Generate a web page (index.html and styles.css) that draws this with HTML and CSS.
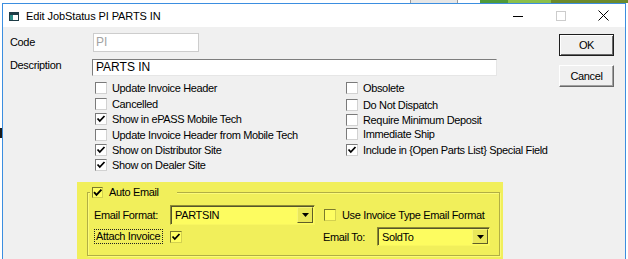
FILE: index.html
```html
<!DOCTYPE html>
<html lang="en">
<head>
    <meta charset="UTF-8">
    <title>Edit JobStatus PI PARTS IN</title>
    <link rel="stylesheet" href="styles.css">
</head>
<body>
    <div class="desk">
        <div class="top-strip">
            <span class="strip-white"></span>
            <span class="strip-box"></span>
            <span class="strip-gap"></span>
            <span class="strip-green"></span>
            <span class="strip-lime"></span>
            <span class="strip-olive"></span>
        </div>
        <div class="desk-row">
            <div class="left-strip"><span class="left-mark"></span></div>
            <div class="window">
                <div class="titlebar">
                    <svg class="app-icon" width="10" height="9" viewBox="0 0 10 9">
                        <rect x="0.5" y="0.5" width="9" height="8" fill="#fff" stroke="#1e3c46"/>
                        <rect x="1" y="1" width="8" height="2" fill="#1e3c46"/>
                        <rect x="1" y="3" width="3" height="5" fill="#2f8f8a"/>
                    </svg>
                    <span class="title">Edit JobStatus PI PARTS IN</span>
                    <div class="controls">
                        <span class="ctl">
                            <svg width="10" height="10" viewBox="0 0 10 10"><line x1="0" y1="5.5" x2="10" y2="5.5" stroke="#000"/></svg>
                        </span>
                        <span class="ctl">
                            <svg width="10" height="10" viewBox="0 0 10 10"><rect x="0.5" y="0.5" width="9" height="9" fill="none" stroke="#cccccc"/></svg>
                        </span>
                        <span class="ctl">
                            <svg width="11" height="11" viewBox="0 0 11 11"><path d="M0.5 0.5 L10.5 10.5 M10.5 0.5 L0.5 10.5" stroke="#000" stroke-width="1"/></svg>
                        </span>
                    </div>
                </div>

                <div class="client">
                    <div class="form">
                        <div class="row row-code">
                            <span class="lbl lbl-code">Code</span>
                            <div class="edit edit-code">PI</div>
                        </div>
                        <div class="row row-desc">
                            <span class="lbl lbl-desc">Description</span>
                            <div class="edit edit-desc">PARTS IN</div>
                        </div>

                        <div class="checks">
                            <div class="check-col left-col">
                                <div class="check h16"><span class="box"></span>Update Invoice Header</div>
                                <div class="check h15"><span class="box"></span>Cancelled</div>
                                <div class="check h16"><span class="box checked"></span>Show in ePASS Mobile Tech</div>
                                <div class="check h15"><span class="box"></span>Update Invoice Header from Mobile Tech</div>
                                <div class="check h15"><span class="box checked"></span>Show on Distributor Site</div>
                                <div class="check h15"><span class="box checked"></span>Show on Dealer Site</div>
                            </div>
                            <div class="check-col right-col">
                                <div class="check h16"><span class="box"></span>Obsolete</div>
                                <div class="check h17"><span class="box"></span>Do Not Dispatch</div>
                                <div class="check h13"><span class="box"></span>Require Minimum Deposit</div>
                                <div class="check h15"><span class="box"></span>Immediate Ship</div>
                                <div class="check h17"><span class="box checked"></span>Include in {Open Parts List} Special Field</div>
                            </div>
                        </div>

                        <div class="highlight">
                            <div class="group">
                                <div class="legend"><span class="box hl checked"></span>Auto Email</div>
                                <div class="grow grow-1">
                                    <span class="lbl-format">Email Format:</span>
                                    <div class="combo combo-format">
                                        <span class="combo-text">PARTSIN</span>
                                        <span class="drop"></span>
                                    </div>
                                    <span class="box hl use-box"></span>
                                    <span>Use Invoice Type Email Format</span>
                                </div>
                                <div class="grow grow-2">
                                    <span class="focus-lbl">Attach Invoice</span>
                                    <span class="box hl checked attach-box"></span>
                                    <span class="lbl-to">Email To:</span>
                                    <div class="combo combo-to">
                                        <span class="combo-text">SoldTo</span>
                                        <span class="drop"></span>
                                    </div>
                                </div>
                            </div>
                        </div>
                    </div>

                    <div class="buttons">
                        <button class="btn btn-default">OK</button>
                        <button class="btn">Cancel</button>
                    </div>
                </div>
            </div>
        </div>
    </div>
</body>
</html>
```

FILE: styles.css
```css
* {
    box-sizing: border-box;
}

body {
    margin: 0;
    width: 628px;
    height: 259px;
    overflow: hidden;
    background-color: #ffffff;
    font-family: 'Liberation Sans', Arial, sans-serif;
    font-size: 11px;
    letter-spacing: -0.35px;
    color: #000000;
}

.desk {
    display: flex;
    flex-direction: column;
    height: 259px;
}

/* bits of the windows behind the dialog */
.top-strip {
    height: 3px;
    display: flex;
}

.strip-white { width: 410px; }
.strip-box { width: 48px; border-left: 1px solid #9a9a9a; border-right: 1px solid #9a9a9a; background-color: #e6e6e6; }
.strip-gap { width: 22px; }
.strip-green { width: 28px; background-color: #4f9a3a; }
.strip-lime { width: 43px; background-color: #8cc04a; }
.strip-olive { width: 77px; background-color: #6c8a2c; }

.desk-row {
    flex: 1;
    display: flex;
}

.left-strip {
    width: 2px;
    padding-top: 125px;
}

.left-mark {
    display: block;
    width: 2px;
    height: 10px;
    background-color: #1a1a1a;
}

.window {
    width: 624px;
    border: 1px solid #3b8ee0;
    border-bottom: none;
    display: flex;
    flex-direction: column;
}

.titlebar {
    height: 23px;
    background-color: #ffffff;
    display: flex;
    align-items: center;
}

.app-icon {
    margin-left: 6px;
    margin-top: 1px;
}

.title {
    margin-left: 7px;
    font-size: 11px;
    letter-spacing: -0.1px;
    color: #000000;
}

.controls {
    margin-left: auto;
    display: flex;
    height: 23px;
}

.ctl {
    width: 43px;
    display: flex;
    align-items: center;
    justify-content: center;
}

.client {
    flex: 1;
    background-color: #f0f0f0;
    display: flex;
}

.form {
    flex: 1;
    padding-left: 7px;
}

.row {
    display: flex;
    align-items: flex-start;
}

.lbl {
    line-height: 13px;
}

.row-code {
    margin-top: 6px;
}

.lbl-code {
    width: 83px;
    margin-top: 3px;
}

.edit {
    background-color: #ffffff;
    white-space: nowrap;
}

.edit-code {
    width: 106px;
    height: 19px;
    border: 1px solid #cdcdcd;
    color: #a3a3a3;
    padding-left: 2px;
    line-height: 17px;
    font-size: 12px;
    letter-spacing: 0;
}

.row-desc {
    margin-top: 7px;
}

.lbl-desc {
    width: 82px;
}

.edit-desc {
    width: 405px;
    height: 17px;
    border: 1px solid;
    border-color: #7d7d7d #e6e6e6 #e6e6e6 #7d7d7d;
    padding-left: 3px;
    line-height: 15px;
    font-size: 12px;
    letter-spacing: 0;
}

.checks {
    display: flex;
    margin-top: 4px;
    margin-left: 85px;
}

.check-col {
    display: flex;
    flex-direction: column;
}

.left-col {
    width: 251px;
}

.check {
    display: flex;
    align-items: center;
    white-space: nowrap;
}

.h13 { height: 13px; }
.h15 { height: 15px; }
.h16 { height: 16px; }
.h17 { height: 17px; }

.box {
    width: 12px;
    height: 12px;
    flex: none;
    margin-right: 5px;
    border: 1px solid;
    border-color: #7a7a7a #d2d2d2 #d2d2d2 #7a7a7a;
    background-color: #ffffff;
    background-repeat: no-repeat;
    background-position: center;
}

.box.checked {
    background-image: url("data:image/svg+xml,%3Csvg xmlns='http://www.w3.org/2000/svg' width='10' height='10' viewBox='0 0 10 10'%3E%3Cpath d='M1.5 4.5 L3.8 7 L8.5 2' fill='none' stroke='%23000' stroke-width='1.8'/%3E%3C/svg%3E");
}

.box.hl {
    border-color: #7b7a2c #d3d150 #d3d150 #7b7a2c;
    background-color: #fefd62;
}

/* highlighter marks over the auto email group */
.highlight {
    margin-top: 10px;
    margin-left: 67px;
    width: 426px;
    height: 77px;
    background-color: #f1ef5b;
    padding: 10px 0 0 10px;
}

.group {
    width: 413px;
    height: 64px;
    border: 1px solid #b1ae45;
    box-shadow: inset 1px 1px 0 #fcfb7a, 1px 1px 0 #fcfb7a;
}

.legend {
    display: flex;
    align-items: center;
    width: 87px;
    height: 14px;
    margin-top: -8px;
    margin-left: 2px;
    padding-left: 2px;
    background-color: #f1ef5b;
}

.legend .box {
    width: 11px;
    height: 11px;
    margin-right: 6px;
}

.grow {
    display: flex;
    align-items: center;
    white-space: nowrap;
}

.grow-1 {
    margin-top: 6px;
    height: 20px;
}

.lbl-format {
    width: 76px;
    margin-left: 6px;
}

.combo {
    display: flex;
    align-items: stretch;
    border: 1px solid;
    border-color: #8e8c35 #f8f660 #f8f660 #8e8c35;
    box-shadow: inset 1px 1px 0 #56552a;
    background-color: #fdfc60;
    padding: 1px 1px 1px 2px;
}

.combo-format {
    width: 145px;
    height: 20px;
}

.combo-to {
    width: 113px;
    height: 19px;
}

.combo-text {
    flex: 1;
    padding-left: 2px;
    font-size: 11px;
    line-height: 16px;
}

.drop {
    width: 16px;
    border: 1px solid;
    border-color: #f7f574 #5e5d28 #5e5d28 #f7f574;
    background-color: #e9e75a;
    background-repeat: no-repeat;
    background-position: center;
    background-image: url("data:image/svg+xml,%3Csvg xmlns='http://www.w3.org/2000/svg' width='7' height='4' viewBox='0 0 7 4'%3E%3Cpath d='M0 0 H7 L3.5 4 Z' fill='%23000'/%3E%3C/svg%3E");
}

.use-box {
    margin-left: 9px;
    margin-right: 6px;
}

.grow-2 {
    margin-top: 2px;
    height: 19px;
}

.focus-lbl {
    width: 69px;
    height: 15px;
    margin-left: 6px;
    border: 1px dotted #222222;
    line-height: 13px;
    padding-left: 1px;
}

.attach-box {
    margin-left: 7px;
    margin-right: 0;
}

.lbl-to {
    width: 54px;
    margin-left: 141px;
}

.buttons {
    width: 55px;
    margin-right: 11px;
    padding-top: 7px;
    display: flex;
    flex-direction: column;
    gap: 9px;
}

.btn {
    width: 55px;
    height: 22px;
    padding: 0;
    font-family: 'Liberation Sans', Arial, sans-serif;
    font-size: 11px;
    letter-spacing: -0.35px;
    color: #000000;
    background-color: #f0f0f0;
    border: 1px solid;
    border-color: #ffffff #696969 #696969 #ffffff;
    box-shadow: inset -1px -1px 0 #a0a0a0;
}

.btn-default {
    border: 1px solid #1e1e1e;
    box-shadow: inset 1px 1px 0 #ffffff, inset -1px -1px 0 #696969;
}
```
